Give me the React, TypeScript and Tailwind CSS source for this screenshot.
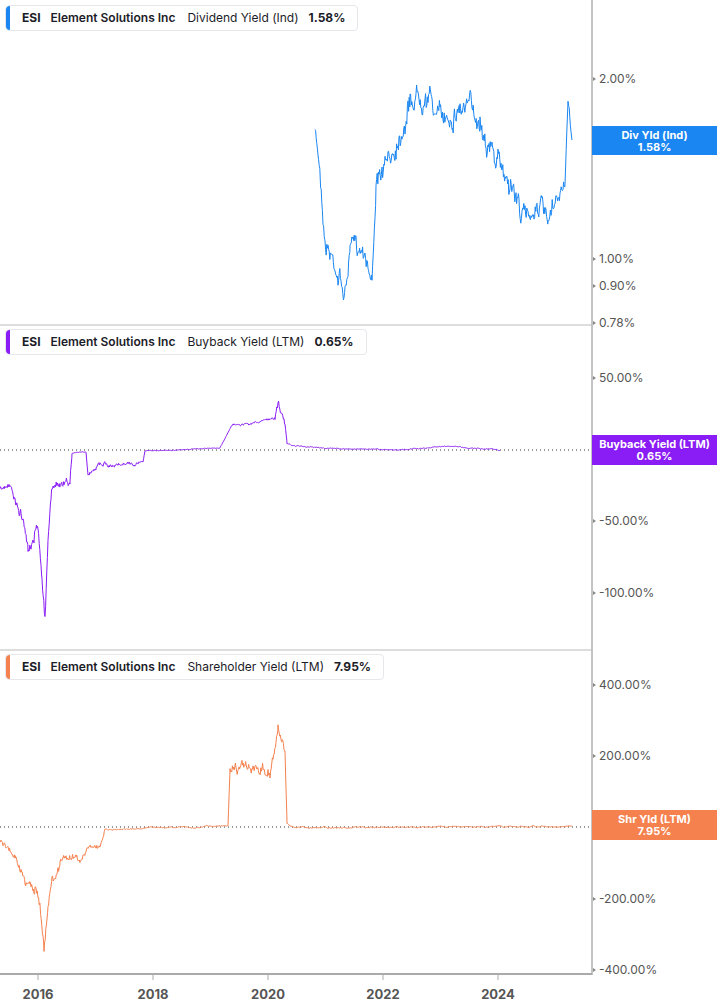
import React from "react"

type KP = [number, number, number]

function rng(seed: number) {
  let s = seed
  return () => {
    s = (s * 16807) % 2147483647
    return s / 2147483647
  }
}

function buildPath(kps: KP[], seed: number) {
  const r = rng(seed)
  const pts: string[] = []
  let walk = 0
  for (let i = 0; i < kps.length - 1; i++) {
    const [x0, y0, n] = kps[i]
    const [x1, y1] = kps[i + 1]
    if (x1 === x0) {
      pts.push(`${x1},${y1}`)
      continue
    }
    for (let x = x0; x < x1; x += 0.6) {
      const t = (x - x0) / (x1 - x0)
      walk = walk * 0.85 + (r() - 0.5) * n * 1.6
      const y = y0 + (y1 - y0) * t + walk + (r() - 0.5) * n * 1.4
      pts.push(`${x.toFixed(1)},${y.toFixed(1)}`)
    }
  }
  const last = kps[kps.length - 1]
  pts.push(`${last[0]},${last[1]}`)
  return "M" + pts.join(" L")
}

const divKps: KP[] = [
  [315, 130, 3], [320, 170, 6], [325, 240, 7], [335, 262, 7], [345, 295, 7], [350, 250, 7], [365, 245, 7],
  [372, 280, 3], [376, 190, 7], [390, 160, 8], [410, 100, 9], [425, 85, 9], [440, 120, 8], [460, 105, 8],
  [480, 115, 8], [495, 160, 8], [510, 180, 8], [525, 220, 7], [540, 200, 7], [548, 230, 7], [560, 195, 5],
  [565, 180, 3], [568, 105, 3], [572, 140, 2],
]
const buyKps: KP[] = [
  [0, 490, 2], [12, 488, 3], [20, 510, 5], [28, 545, 6], [38, 525, 4], [42, 580, 5], [45, 620, 4], [48, 540, 3],
  [52, 485, 3], [70, 480, 2], [72, 452, 0.3], [86, 452, 0.3], [88, 475, 2], [100, 465, 1.5], [143, 462, 0.5],
  [145, 451, 0.3], [220, 448, 0.3], [232, 425, 1], [275, 420, 2], [278, 405, 3], [285, 425, 1], [287, 445, 0.5],
  [315, 448, 0.3], [400, 450, 0.3], [450, 446, 0.4], [500, 450, 0.2],
]
const shrKps: KP[] = [
  [0, 843, 2], [15, 855, 3], [25, 880, 4], [35, 890, 5], [40, 905, 5], [44, 945, 4], [48, 900, 4], [52, 880, 4],
  [60, 860, 3], [80, 855, 2], [100, 845, 2], [105, 830, 0.5], [145, 828, 0.5], [228, 826, 0.4], [230, 770, 4],
  [250, 765, 4], [270, 770, 4], [278, 730, 4], [285, 760, 3], [287, 828, 0.5], [572, 826, 0.6],
]

function Legend({ color, label, value }: { color: string; label: string; value: string }) {
  return (
    <div className="flex h-[26px] w-fit items-center gap-[10px] rounded border border-gray-200 bg-white pr-3 text-[12px] text-[#1c1c28]">
      <div className="mr-[2px] h-full w-[4px] rounded-l" style={{ background: color }} />
      <span className="font-bold">ESI</span>
      <span className="font-semibold">Element Solutions Inc</span>
      <span className="pl-[2px]">{label}</span>
      <span className="font-bold">{value}</span>
    </div>
  )
}

const ticks: [number, string][] = [
  [79, "2.00%"], [259, "1.00%"], [286, "0.90%"], [323, "0.78%"],
  [378, "50.00%"], [450, "0.00%"], [521, "-50.00%"], [593, "-100.00%"],
  [685, "400.00%"], [756, "200.00%"], [827, "0.00%"], [899, "-200.00%"], [970, "-400.00%"],
]

export default function App() {
  return (
    <div className="relative h-[1005px] w-[717px] overflow-hidden bg-white" style={{ fontFamily: "Inter, 'Liberation Sans', sans-serif" }}>
      <svg className="absolute left-0 top-0" width="717" height="1005">
        <line x1="592" y1="0" x2="592" y2="975" stroke="#888" />
        <line x1="0" y1="325" x2="592" y2="325" stroke="#bbb" />
        <line x1="0" y1="650" x2="592" y2="650" stroke="#bbb" />
        <line x1="0" y1="974" x2="592" y2="974" stroke="#aaa" strokeWidth="2" />
        {[38, 153, 268, 383, 498].map((x) => (
          <line key={x} x1={x} y1="974" x2={x} y2="980" stroke="#aaa" />
        ))}
        <line x1="0" y1="450" x2="592" y2="450" stroke="#333" strokeDasharray="1 3" />
        <line x1="0" y1="827" x2="592" y2="827" stroke="#333" strokeDasharray="1 3" />
        {ticks.map(([y]) => (
          <path key={y} d={`M593 ${y - 2} L596 ${y} L593 ${y + 2}Z`} fill="#888" />
        ))}
        <path d={buildPath(divKps, 7)} fill="none" stroke="#1a86f2" strokeWidth="1" />
        <path d={buildPath(buyKps, 11)} fill="none" stroke="#8a1cf5" strokeWidth="1" />
        <path d={buildPath(shrKps, 23)} fill="none" stroke="#f5814e" strokeWidth="1" />
      </svg>
      {ticks.map(([y, t]) => (
        <div key={y} className="absolute left-[599px] text-[12px] leading-none text-[#555]" style={{ top: y - 6 }}>
          {t}
        </div>
      ))}
      {[[38, "2016"], [153, "2018"], [268, "2020"], [383, "2022"], [498, "2024"]].map(([x, t]) => (
        <div key={t} className="absolute top-[985px] w-[40px] text-center text-[13px] font-bold text-[#555]" style={{ left: (x as number) - 20 }}>
          {t}
        </div>
      ))}
      <div className="absolute left-[5px] top-[5px]"><Legend color="#1a86f2" label="Dividend Yield (Ind)" value="1.58%" /></div>
      <div className="absolute left-[5px] top-[329px]"><Legend color="#8a1cf5" label="Buyback Yield (LTM)" value="0.65%" /></div>
      <div className="absolute left-[5px] top-[654px]"><Legend color="#f5814e" label="Shareholder Yield (LTM)" value="7.95%" /></div>
      <div className="absolute left-[592px] top-[126px] flex h-[29px] w-[125px] flex-col items-center justify-center bg-[#1a86f2] text-[11px] font-bold leading-[12px] text-white">
        <span>Div Yld (Ind)</span><span>1.58%</span>
      </div>
      <div className="absolute left-[592px] top-[435px] flex h-[30px] w-[125px] flex-col items-center justify-center bg-[#8a1cf5] text-[11px] font-bold leading-[12px] text-white">
        <span>Buyback Yield (LTM)</span><span>0.65%</span>
      </div>
      <div className="absolute left-[592px] top-[810px] flex h-[30px] w-[125px] flex-col items-center justify-center bg-[#f5814e] text-[11px] font-bold leading-[12px] text-white">
        <span>Shr Yld (LTM)</span><span>7.95%</span>
      </div>
    </div>
  )
}
